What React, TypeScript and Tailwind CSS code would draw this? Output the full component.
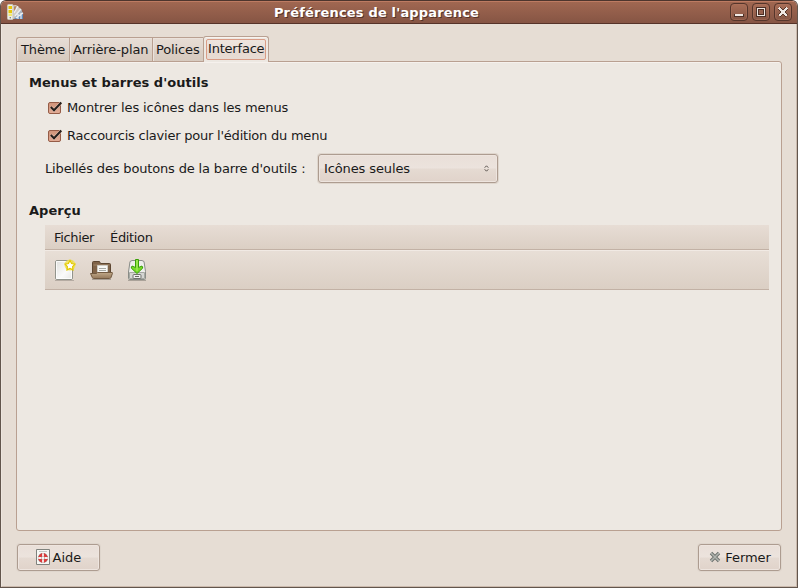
import type { ReactNode } from "react";

function AppIcon() {
  return (
    <svg width="17" height="17" viewBox="0 0 17 17">
      <path d="M5 15V1.500L9 1l5 4 2 5v5Z" fill="#d3cdc6" />
      <path d="M6 15 14 5l2 5-8 5Z" fill="#a9b4c0" />
      <path d="M7 15 16 9.500V15Z" fill="#5f89bb" />
      <path d="M7 9 11 2M8 12 14 5M9 14l7-5M11 10v5M14 9v6" stroke="#edf0f2" strokeWidth="1.200" />
      <path d="M7 2.500 9.500 2 8.500 5 7 7Z" fill="#b48466" />
      <rect x=".5" y=".5" width="5.500" height="15" rx="1" fill="#efeee7" stroke="#c8c5bb" />
      <path d="M1.500 2h3.500v3H1.500zM1.500 6h3.500v3H1.500z" fill="#e5c60a" />
      <path d="M1.500 9.500h3.500V12H1.500z" fill="#f2e873" />
      <circle cx="3.300" cy="13.800" r=".8" fill="#77786f" />
    </svg>
  );
}

function WindowButton({ children }: { children: ReactNode }) {
  return (
    <div className="h-[18px] w-[18px] rounded-[4px] border border-[#55352b] bg-linear-to-b from-[#a96e57] to-[#865544] shadow-[inset_0_0_0_1px_#b0745d80]">
      <svg className="-m-px block" width="18" height="18" viewBox="0 0 18 18" shapeRendering="crispEdges">
        {children}
      </svg>
    </div>
  );
}

function CheckRow({ children }: { children: ReactNode }) {
  return (
    <div className="flex h-7 items-center">
      <svg width="15" height="14" viewBox="0 0 15 14" className="mr-1">
        <defs>
          <linearGradient id="box" x2="0" y2="1">
            <stop stopColor="#cf9379" />
            <stop offset="1" stopColor="#e2ad97" />
          </linearGradient>
        </defs>
        <rect x=".5" y="1.500" width="12" height="11" rx="1.500" fill="url(#box)" stroke="#955c47" />
        <path d="M3 6.200 6 9.300 13 1.700" fill="none" stroke="#e9c5b5" strokeWidth="3" />
        <path d="M2.800 6 6 9.300 13.300 1.500" fill="none" stroke="#241f1c" strokeWidth="2" />
      </svg>
      {children}
    </div>
  );
}

const raised =
  "border border-[#ad9c90] bg-[linear-gradient(to_bottom,#e9dfd8_0%,#ece3dd_48%,#e5dad2_52%,#e0d3ca_100%)] shadow-[inset_0_0_0_1px_#eee5df,0_0_0_1px_#dfd6cd]";
const tab =
  "h-[25px] border-t border-b border-l border-[#b9a091] bg-[linear-gradient(to_bottom,#e7ddd5_0%,#e1d6cd_49%,#dcd0c6_52%,#d7cabf_100%)] pt-[4px] tracking-[-0.12px] shadow-[inset_1px_1px_0_#ebe2db]";

function NewIcon() {
  return (
    <svg width="24" height="24" viewBox="0 0 24 24">
      <defs>
        <linearGradient id="paper" x2="1" y2="1">
          <stop stopColor="#dfe0dc" />
          <stop offset=".6" stopColor="#fafafa" />
          <stop offset="1" stopColor="#e7e7e4" />
        </linearGradient>
      </defs>
      <path d="M2 22.500h19" stroke="#b5aba2" />
      <rect x="2.500" y="2.500" width="17" height="19" rx="1.500" fill="url(#paper)" stroke="#92948c" />
      <rect x="3.500" y="3.500" width="15" height="17" fill="none" stroke="#fff" strokeOpacity=".8" />
      <circle cx="17" cy="7" r="5.500" fill="#f0e34e" opacity=".85" />
      <path d="m17 2.500 1.600 3 3.300.6-2.300 2.500.4 3.300-3-1.400-3 1.400.4-3.300-2.300-2.500 3.300-.6Z" fill="#fff" stroke="#e3c800" strokeWidth="1.200" />
    </svg>
  );
}

function OpenIcon() {
  return (
    <svg width="24" height="24" viewBox="0 0 24 24">
      <defs>
        <linearGradient id="folder" x2="0" y2="1">
          <stop stopColor="#c0a889" />
          <stop offset="1" stopColor="#95795b" />
        </linearGradient>
      </defs>
      <path d="M3 21.500h19" stroke="#a89e94" />
      <path d="M3.500 18V4.500q0-1 1-1h6l1 2h9q1 0 1 1V18Z" fill="#806449" stroke="#5d4732" />
      <path d="M4.500 7h16" stroke="#a08568" />
      <path d="M8.500 17V7.500h10V17" fill="#f8f8f5" stroke="#d0cec7" />
      <path d="M10 10.500h7M10 12.500h7" stroke="#a8aaa5" />
      <path d="M1.500 15.500h6l1-1h14.500q.8 0 .4 1l-1.400 4q-.3 1-1.500 1H4.500q-1 0-1.200-1Z" fill="url(#folder)" stroke="#735b42" />
    </svg>
  );
}

function SaveIcon() {
  return (
    <svg width="24" height="24" viewBox="0 0 24 24">
      <path d="M3 22.500h18" stroke="#aaa299" />
      <path d="M5 3.500 7 2.500h10l2 1 1.500 10V20.500q0 1-1 1h-15q-1 0-1-1V14Z" fill="#eeeeec" stroke="#898c87" />
      <path d="M4.500 14.500h15v6h-15Z" fill="#d4d5d2" stroke="#a6a9a3" />
      <rect x="8" y="16.500" width="8" height="4" rx="1" fill="#eee" stroke="#6f716d" />
      <path d="M10 18.500h4" stroke="#686965" />
      <path d="M10.500 1.500h3v8l3.500-1.500.8 2L12 15.500 6.200 10 7 8l3.500 1.500Z" fill="#77db27" stroke="#3a9e08" />
      <path d="M12 2v11" stroke="#b3f06d" />
    </svg>
  );
}

export default function App() {
  return (
    <div className="bg-white">
      <div className="flex h-[588px] w-[798px] flex-col overflow-hidden rounded-t-[6px] border border-[#4d352d] border-x-[#62554c] border-b-[#62554c] bg-[#e6ddd4] font-['DejaVu_Sans',sans-serif] text-[13px] leading-[16px] text-[#1a1a1a]">
        <header className="flex h-[23px] shrink-0 items-center border-t border-b border-t-[#bd7b62] border-b-[#563329] bg-linear-to-b from-[#a06751] to-[#865544] pr-[5px] pl-[6px]">
          <AppIcon />
          <h1 className="flex-1 pr-[1px] text-center font-bold tracking-[0.17px] text-white [text-shadow:1px_1px_0_#563328]">Préférences de l'apparence</h1>
          <div className="flex h-full items-start gap-1 pt-px">
            <WindowButton>
              <path d="M4 11h10v3H4z" fill="#4d3027" /><path d="M5 11h8v2H5z" fill="#f0e8e3" />
            </WindowButton>
            <WindowButton>
              <path d="M4 4h10v10H4z" fill="#4d3027" /><path d="M5 5h8v8H5z" fill="#f0e8e3" /><path d="M6 6h6v6H6z" fill="#4d3027" /><path d="M7 7h4v4H7z" fill="#96614e" />
            </WindowButton>
            <WindowButton>
              <path d="m5 5 8 8m0-8-8 8" stroke="#56372c" strokeWidth="4" /><path d="m5 5 8 8m0-8-8 8" stroke="#f0e8e3" strokeWidth="2.300" />
            </WindowButton>
          </div>
        </header>

        <main className="flex flex-1 flex-col border-x border-b border-[#eee6df] border-r-[#cbbaad] border-b-[#cbbaad] px-[14px] pt-[12px] pb-[14px]">
          <nav className="relative z-10 -mb-px flex h-[26px] shrink-0 items-end">
            <div className={`${tab} w-[53px] rounded-tl-[3px] pl-[4px]`}>Thème</div>
            <div className={`${tab} w-[83px] pl-[3px]`}>Arrière-plan</div>
            <div className={`${tab} w-[51px] pl-[3px]`}>Polices</div>
            <div className="h-[26px] w-[66px] rounded-t-[3px] border border-b-0 border-[#b9a091] bg-[#ede8e2] p-[2px] shadow-[inset_0_1px_0_#f8f3ef]">
              <div className="h-[21px] w-[60px] rounded-[2px] border border-[#d99c86] bg-[linear-gradient(to_bottom,#eee5de_0%,#eadfd8_48%,#e6d9d0_52%,#e8dcd4_100%)] pt-px pl-px tracking-[-0.2px]">Interface</div>
            </div>
          </nav>

          <section className="h-[470px] shrink-0 rounded-b-[3px] rounded-tr-[3px] border border-[#b9a091] bg-[#ede8e2] px-[12px] pt-[13px] shadow-[inset_0_1px_0_#f6f1ed]">
            <h2 className="font-bold tracking-[0.05px]">Menus et barres d'outils</h2>
            <div className="mt-[3px] pl-[19px]">
              <CheckRow><span className="tracking-[-0.12px]">Montrer les icônes dans les menus</span></CheckRow>
              <CheckRow><span className="tracking-[-0.22px]">Raccourcis clavier pour l'édition du menu</span></CheckRow>
            </div>
            <div className="mt-[4px] flex h-[29px] items-center pl-[16px]">
              <span className="w-[273px] tracking-[-0.16px]">Libellés des boutons de la barre d'outils :</span>
              <button className={`${raised} flex h-[29px] w-[180px] items-center justify-between rounded-[3px] pr-[8px] pl-[5px] tracking-[-0.12px]`}>
                Icônes seules
                <svg width="5" height="7" viewBox="0 0 5 7"><path d="M.7 2.700 2.500.8l1.800 1.900M.7 4.300l1.800 1.900 1.800-1.900" fill="none" stroke="#5a534e" /></svg>
              </button>
            </div>

            <h2 className="mt-[20px] font-bold tracking-[0.05px]">Aperçu</h2>
            <div className="mt-[6px] ml-[16px] w-[724px]">
              <div className="flex h-[25px] items-center gap-[16px] border-b border-[#c2b1a5] bg-linear-to-b from-[#e7ddd5] to-[#dbcfc4] pt-[2px] pl-[9px] tracking-[-0.35px]">
                <span>Fichier</span><span>Édition</span>
              </div>
              <div className="flex h-[40px] items-center gap-[12px] border-b border-[#c2b1a5] bg-linear-to-b from-[#e8dfd7] to-[#dbcfc4] pt-px pl-[8px] shadow-[inset_0_1px_0_#f1eae4]">
                <NewIcon /><OpenIcon /><SaveIcon />
              </div>
            </div>
          </section>

          <footer className="mt-[13px] flex justify-between px-px">
            <button className={`${raised} flex h-[27px] w-[83px] items-center justify-center gap-[3px] rounded-[3px]`}>
              <svg width="14" height="16" viewBox="0 0 14 16" className="-mt-px">
                <path d="M.5.5h13v15H.5z" fill="#f7f7f4" stroke="#7f827d" /><path d="M3 2.500h8" stroke="#c3c8c4" />
                <circle cx="7" cy="9" r="3.300" fill="none" stroke="#8b8580" strokeWidth="3.600" />
                <circle cx="7" cy="9" r="3.300" fill="none" stroke="#dd3939" strokeWidth="2.800" />
                <path d="M7 4.200v3.200M7 10.600v3.200M2.200 9h3.200M8.600 9h3.200" stroke="#f4f1ef" strokeWidth="1.800" />
              </svg>
              Aide
            </button>
            <button className={`${raised} flex h-[27px] w-[83px] items-center justify-center gap-[4px] rounded-[3px] pl-px tracking-[-0.1px]`}>
              <svg width="12" height="12" viewBox="0 0 12 12" className="-mt-px"><path d="m2 2 8 8m0-8-8 8" stroke="#6d726e" strokeWidth="3.400" /><path d="m2 2 8 8m0-8-8 8" stroke="#b0b4af" strokeWidth="1.600" /></svg>
              Fermer
            </button>
          </footer>
        </main>
      </div>
    </div>
  );
}
